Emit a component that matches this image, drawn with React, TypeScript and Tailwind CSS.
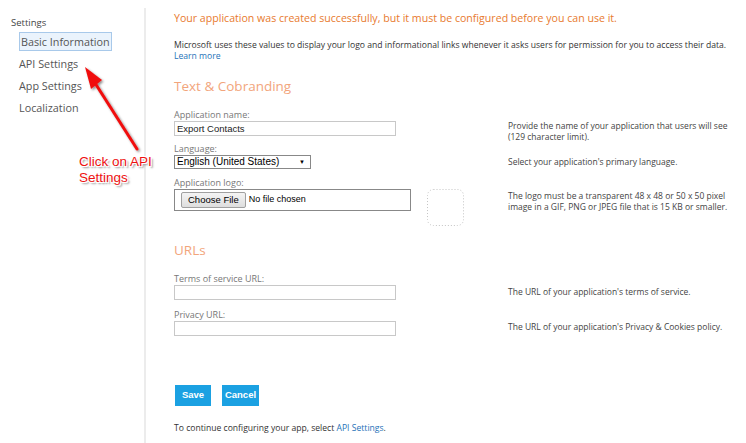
const navItems = ['API Settings', 'App Settings', 'Localization'];

function Field({
  label,
  help,
  helpPad,
  children,
}: {
  label: string;
  help: React.ReactNode;
  helpPad: string;
  children: React.ReactNode;
}) {
  return (
    <div className="flex">
      <div className="w-[334px] shrink-0">
        <div className="text-[9px] leading-[12px] text-[#777]">{label}</div>
        {children}
      </div>
      <div className={`${helpPad} text-[8.5px] leading-[10.5px] text-[#444]`}>{help}</div>
    </div>
  );
}

function TextBox({ value }: { value?: string }) {
  return (
    <div className="h-[15px] w-[222px] border border-[#c8c8c8] bg-white pl-[2px] font-['Liberation_Sans',Arial,sans-serif] text-[9.5px] leading-[13px] text-[#222]">
      {value}
    </div>
  );
}

export default function App() {
  return (
    <div className="relative flex h-[443px] w-[746px] overflow-hidden bg-white font-['Open_Sans',sans-serif] text-[#444]">
      {/* sidebar */}
      <aside className="w-[144px] shrink-0 pl-[11px] pt-[16px]">
        <div className="text-[9.5px] leading-[14px] text-[#444]">Settings</div>
        <nav className="ml-[8px] mt-[2px] flex flex-col whitespace-nowrap text-[10.8px] text-[#555]">
          <div className="h-[19px] w-[93px] border border-[#a8c9ea] bg-[#eaf3fc] pl-[1px] leading-[17px]">
            Basic Information
          </div>
          <div className="mt-[2px] flex flex-col">
            {navItems.map((n) => (
              <div key={n} className="leading-[22px]">
                {n}
              </div>
            ))}
          </div>
        </nav>
      </aside>

      {/* main */}
      <main className="mt-[8px] flex-1 border-l-2 border-[#ececec] pl-[28px]">
        <h1 className="mt-[3px] text-[10.6px] leading-[14px] text-[#e87a2e]">
          Your application was created successfully, but it must be configured before you can use it.
        </h1>
        <p className="mt-[15px] text-[8.6px] leading-[11px] text-[#333]">
          Microsoft uses these values to display your logo and informational links whenever it asks users for
          permission for you to access their data.
          <br />
          <a className="text-[#2672b8]">Learn more</a>
        </p>

        <h2 className="mt-[15px] text-[13.5px] leading-[18px] text-[#f2a57c]">Text &amp; Cobranding</h2>

        <div className="mt-[14px]">
          <Field
            label="Application name:"
            helpPad="pt-[12px]"
            help={
              <>
                Provide the name of your application that users will see
                <br />
                (129 character limit).
              </>
            }
          >
            <TextBox value="Export Contacts" />
          </Field>
        </div>

        <div className="mt-[1px]">
          <Field label="Language:" helpPad="pt-[14px]" help="Select your application's primary language.">
            <div className="flex h-[14px] w-[137px] items-center justify-between border border-[#888] bg-white pl-[2px] pr-[5px] font-['Liberation_Sans',Arial,sans-serif] text-[10px] leading-[12px] text-black">
              <span>English (United States)</span>
              <span className="text-[6px]">▼</span>
            </div>
          </Field>
        </div>

        <div className="mt-[8px]">
          <Field
            label="Application logo:"
            helpPad="pt-[14px]"
            help={
              <>
                The logo must be a transparent 48 x 48 or 50 x 50 pixel
                <br />
                image in a GIF, PNG or JPEG file that is 15 KB or smaller.
              </>
            }
          >
            <div className="flex items-start">
              <div className="flex h-[22px] w-[237px] items-center border border-[#888] bg-white pl-[6px] font-['Liberation_Sans',Arial,sans-serif] text-[9.5px] text-black">
                <div className="flex h-[16px] items-center rounded-[2px] border border-[#a0a0a0] bg-gradient-to-b from-[#f4f4f4] to-[#dedede] px-[6px]">
                  Choose File
                </div>
                <span className="ml-[3px] text-[9px]">No file chosen</span>
              </div>
              <svg className="ml-[16px]" width="37" height="37" viewBox="0 0 37 37">
                <rect
                  x="0.5"
                  y="0.5"
                  width="36"
                  height="36"
                  rx="6"
                  fill="none"
                  stroke="#c4c4c4"
                  strokeDasharray="1 2"
                />
              </svg>
            </div>
          </Field>
        </div>

        <h2 className="mt-[15px] text-[13.5px] leading-[18px] text-[#f2a57c]">URLs</h2>

        <div className="mt-[14px]">
          <Field label="Terms of service URL:" helpPad="pt-[14px]" help="The URL of your application's terms of service.">
            <TextBox />
          </Field>
        </div>

        <div className="mt-[9px]">
          <Field
            label="Privacy URL:"
            helpPad="pt-[13px]"
            help={<>The URL of your application's Privacy &amp; Cookies policy.</>}
          >
            <TextBox />
          </Field>
        </div>

        <div className="mt-[49px] flex gap-[11px] pl-[1px]">
          <button className="h-[21px] w-[36px] bg-[#1ba1e2] font-['Liberation_Sans',Arial,sans-serif] text-[9.5px] font-bold text-white">
            Save
          </button>
          <button className="h-[21px] w-[37px] bg-[#1ba1e2] font-['Liberation_Sans',Arial,sans-serif] text-[9.5px] font-bold text-white">
            Cancel
          </button>
        </div>

        <p className="mt-[16px] text-[8.6px] leading-[12px] text-[#333]">
          To continue configuring your app, select <a className="text-[#2672b8]">API Settings</a>.
        </p>
      </main>

      {/* annotation */}
      <svg className="pointer-events-none absolute left-0 top-0" width="746" height="443">
        <defs>
          <filter id="sh" x="-20%" y="-20%" width="140%" height="140%">
            <feDropShadow dx="1.5" dy="1.5" stdDeviation="1.2" floodColor="#000" floodOpacity="0.45" />
          </filter>
        </defs>
        <g filter="url(#sh)">
          <line x1="137" y1="149" x2="95" y2="83" stroke="#f01010" strokeWidth="3" strokeLinecap="round" />
          <polygon points="85,67 102,80 91,89" fill="#f01010" />
        </g>
      </svg>
      <div className="absolute left-[79px] top-[154px] font-['Liberation_Sans',Arial,sans-serif] text-[13.5px] leading-[16px] text-[#ee1111] [text-shadow:-1px_-1px_0_#fff,1px_-1px_0_#fff,-1px_1px_0_#fff,1px_1px_0_#fff,2px_2px_2px_rgba(0,0,0,0.5)]">
        Click on API
        <br />
        Settings
      </div>
    </div>
  );
}
